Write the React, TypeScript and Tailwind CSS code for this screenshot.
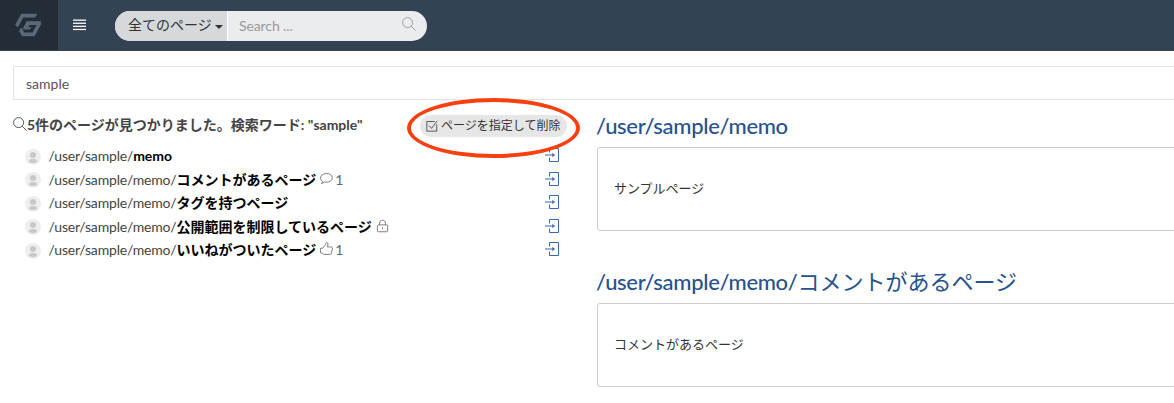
import type { ReactNode } from 'react';

type Row = { base: string; name: string; icon?: 'comment' | 'lock' | 'like'; count?: number };

const rows: Row[] = [
  { base: '/user/sample/', name: 'memo' },
  { base: '/user/sample/memo/', name: 'コメントがあるページ', icon: 'comment', count: 1 },
  { base: '/user/sample/memo/', name: 'タグを持つページ' },
  { base: '/user/sample/memo/', name: '公開範囲を制限しているページ', icon: 'lock' },
  { base: '/user/sample/memo/', name: 'いいねがついたページ', icon: 'like', count: 1 },
];

function Stroke({ children, className }: { children: ReactNode; className: string }) {
  return (
    <svg viewBox="0 0 14 14" fill="none" stroke="currentColor" strokeWidth="0.9" className={className}>
      {children}
    </svg>
  );
}

function SearchIcon({ className }: { className: string }) {
  return (
    <Stroke className={className}>
      <circle cx="5.6" cy="5.6" r="5" />
      <path d="M9.2 9.2 13.6 13.6" />
    </Stroke>
  );
}

function RowIcon({ kind }: { kind: 'comment' | 'lock' | 'like' }) {
  if (kind === 'comment')
    return (
      <Stroke className="mb-[2px] h-[13px] w-[13px]">
        <path d="M2.5 9.9C1.2 9.1.6 7.8.6 6.4.6 3.6 3.4 1.6 7 1.6s6.3 2 6.3 4.7S10.5 11 7 11c-.8 0-1.5-.1-2.1-.3L1.7 12.6c.5-.8 1-1.8.8-2.7Z" />
      </Stroke>
    );
  if (kind === 'lock')
    return (
      <Stroke className="mb-px h-[14px] w-[13px]">
        <rect x="1.5" y="5.8" width="11" height="7.4" rx="1" />
        <path d="M3.8 5.8V3.9C3.8 2 5.2.8 7 .8s3.2 1.2 3.2 3.1v1.9M7 8.4v2.2" />
      </Stroke>
    );
  return (
    <Stroke className="mb-[2px] h-[13px] w-[13px]">
      <path d="M.6 11.6V6.7h2.2L5.9 3.1C6.4 2.4 6.3 1.5 6.4.9c.2-.7 1.8-.4 2.1.7.3 1.1-.2 2.7-.6 3.7h3.8c1.1 0 1.8.7 1.7 1.4l-1 5.1c-.2.9-.9 1.6-1.8 1.6H5.4c-1 0-1.7-.3-2.6-1.1L.6 11.6Z" />
    </Stroke>
  );
}

function Preview({ path, name, body }: { path: string; name?: string; body: string }) {
  return (
    <section className="h-[156px]">
      <h2 className="-ml-px flex h-[43px] items-center whitespace-nowrap text-[22px] leading-none text-[#27518f]">
        <span className="font-medium tracking-[-0.32px]">{path}</span>
        {name && <span>{name}</span>}
      </h2>
      <div className="flex h-[84px] items-center rounded-[3px] border border-[#ccc] px-4 text-[13px] text-[#333]">{body}</div>
    </section>
  );
}

export default function App() {
  return (
    <div className="relative h-[403px] w-full overflow-hidden bg-white font-['Lato','Noto_Sans_CJK_JP',sans-serif] text-[14px] text-[#444]">
      <header className="flex h-[51px] items-center bg-[#344354]">
        <div className="flex h-[50px] w-[58px] self-start bg-[#222d37] pl-[15px] pt-[13px]">
          <svg viewBox="0 0 26 24" className="h-[24px] w-[26px]" fill="#5b6878">
            <path d="M6.2.7H22.3L20.2 4.6H8.4L2.6 14.6.2 11.8Z" />
            <path d="M11.6 8.2H25.9V11.6L19.6 23.3H7.2L4 18 6.1 14.6 9.3 19.6H17.4L21.6 11.9H14.6L13.3 14.2H16.6L14.9 16.6H7.4Z" />
          </svg>
        </div>
        <svg viewBox="0 0 13 12" fill="#fff" className="mb-[2px] ml-[15px] h-[12px] w-[13px]">
          <rect y="0.5" width="13" height="1.3" />
          <rect y="3.6" width="13" height="1.3" />
          <rect y="6.7" width="13" height="1.3" />
          <rect y="9.8" width="13" height="1.3" />
        </svg>
        <div className="ml-[29px] flex h-[30px] w-[312px] overflow-hidden rounded-full bg-[#ebecee]">
          <button className="flex w-[113px] items-center border-r border-white bg-[#d6d9dc] pl-[13px] text-[#333]">
            <span className="mt-[-2px] whitespace-nowrap">全てのページ</span>
            <i className="ml-[3px] mt-[2px] border-x-4 border-t-4 border-x-transparent border-t-[#333]" />
          </button>
          <div className="flex flex-1 items-center justify-between pl-[11px] pr-[11px] text-[#999]">
            <span className="tracking-[-0.1px]">Search ...</span>
            <SearchIcon className="mb-[4px] h-[14px] w-[14px]" />
          </div>
        </div>
      </header>

      <div className="ml-[13px] mt-[15px] flex h-[34px] items-center border border-r-0 border-[#e3e3e3] pl-3 text-[#555]">sample</div>

      <main className="flex">
        <section className="w-[597px] pl-[13px] pr-[30px]">
          <div className="mt-[14px] flex h-[22px] items-center justify-between">
            <h1 className="mb-[2px] flex items-center whitespace-nowrap text-[14px] font-bold text-[#444]">
              <SearchIcon className="h-[14px] w-[14px]" />
              5件のページが見つかりました。検索ワード: "sample"
            </h1>
            <button className="mt-[2px] flex h-[22px] w-[147px] items-center gap-[3px] rounded-full bg-[#e6e6e6] pl-[6px] text-[12px] text-[#333]">
              <Stroke className="h-[12px] w-[12px]">
                <path d="M12.5 5V13H1V1.8H10.2M3.5 6.6 6.5 9.8 13 1" />
              </Stroke>
              <span className="whitespace-nowrap">ページを指定して削除</span>
            </button>
          </div>
          <ul className="mt-[8px]">
            {rows.map((r, i) => (
              <li key={i} className="flex h-[23.5px] items-center pl-3">
                <svg viewBox="0 0 16 16" className="mt-[2px] h-4 w-4">
                  <circle cx="8" cy="8" r="8" fill="#edeef1" />
                  <circle cx="8" cy="6" r="3" fill="#c8c8ca" />
                  <path d="M4 13c0-3 2-3 4-3s4 0 4 3c-2 1.3-6 1.3-8 0Z" fill="#c8c8ca" />
                </svg>
                <span className="ml-[7.5px] whitespace-nowrap">
                  <span className="tracking-[-0.18px]">{r.base}</span>
                  <b className="text-black">{r.name}</b>
                </span>
                {r.icon && (
                  <span className="ml-[4px] flex items-center gap-[2px] text-[#666]">
                    <RowIcon kind={r.icon} />
                    {r.count}
                  </span>
                )}
                <svg viewBox="0 0 14 14" fill="none" stroke="#3968a8" className="mb-px ml-auto mr-[8px] h-[14px] w-[14px]">
                  <path d="M4.5 4.5V.5H13.5V13.5H4.5V9.5M0 7H9.5" />
                  <path d="M7.3 4.8 9.8 7 7.3 9.2Z" fill="#3968a8" stroke="none" />
                </svg>
              </li>
            ))}
          </ul>
        </section>
        <section className="min-w-0 flex-1 pt-[4px]">
          <div className="-mr-1">
            <Preview path="/user/sample/memo" body="サンプルページ" />
            <Preview path="/user/sample/memo/" name="コメントがあるページ" body="コメントがあるページ" />
          </div>
        </section>
      </main>

      <div className="absolute left-[407px] top-[98px] h-[60px] w-[173px] rounded-[50%] border-4 border-[#f8400f]" />
    </div>
  );
}
